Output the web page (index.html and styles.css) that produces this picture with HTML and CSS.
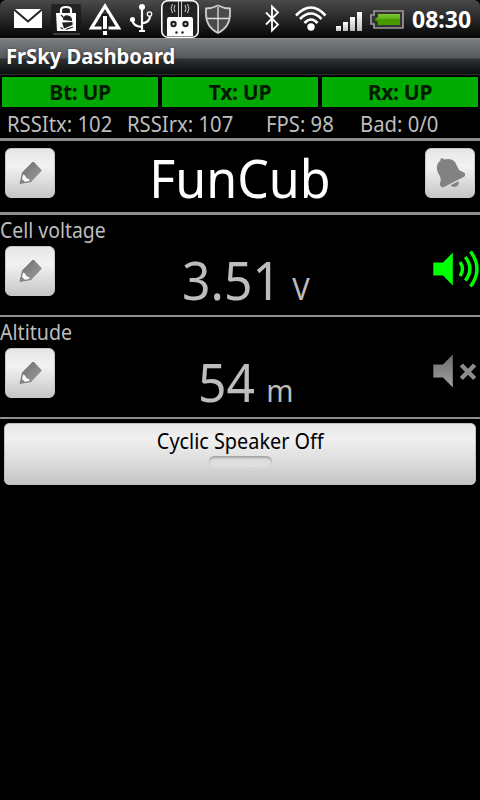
FILE: index.html
```
<!DOCTYPE html>
<html lang="en">
<head>
  <meta charset="UTF-8">
  <meta name="viewport" content="width=device-width, initial-scale=1.0">
  <title>FrSky Dashboard</title>
  <link rel="stylesheet" href="styles.css">
</head>
<body>
  <svg class="defs" width="0" height="0">
    <defs>
      <linearGradient id="pencilFill" x1="0" y1="0" x2="1" y2="1">
        <stop offset="0" stop-color="#6c6c6c"/>
        <stop offset="1" stop-color="#a0a0a0"/>
      </linearGradient>
      <linearGradient id="muteFill" x1="0" y1="0" x2="0" y2="1">
        <stop offset="0" stop-color="#6c6c6c"/>
        <stop offset="1" stop-color="#a0a0a0"/>
      </linearGradient>
      <linearGradient id="batteryFill" x1="0" y1="0" x2="0" y2="1">
        <stop offset="0" stop-color="#7cc536"/>
        <stop offset="0.5" stop-color="#5cae14"/>
        <stop offset="0.5" stop-color="#489a00"/>
        <stop offset="1" stop-color="#489a00"/>
      </linearGradient>
      <linearGradient id="barFill" x1="0" y1="0" x2="0" y2="1">
        <stop offset="0" stop-color="#fff"/>
        <stop offset="1" stop-color="#bbb"/>
      </linearGradient>
      <symbol id="pencil" viewBox="0 0 50 50">
        <path d="M15 35.500L17.500 24.500L27.500 14H29L37 22.500L26.500 33.500Z" fill="url(#pencilFill)"/>
        <path d="M18 26.500L20 27.500L21.500 30L24 31.200L24.500 33L20 33.800L17 31Z" fill="#fafafa"/>
        <path d="M15 35.500L17.500 24.500L28 14M15 35.500L26.500 33.500" fill="none" stroke="#757575" stroke-width="0.8"/>
      </symbol>
    </defs>
  </svg>

  <header class="status">
    <!-- notifications -->
    <svg class="status__icons" width="240" height="38" viewBox="0 0 240 38">
      <path d="M14 9H42V28H14Z" fill="#fff"/>
      <path d="M14 9.500L28 21.500L42 9.500" fill="none" stroke="#222" stroke-width="2"/>
      <rect x="51" y="4" width="30" height="30" rx="2" fill="#151515" opacity="0.65"/>
      <path d="M53 34H80" stroke="#666"/>
      <path d="M56 13H76V31H57Z" fill="#fff"/>
      <path d="M61 14V10Q61 7 66 7Q71 7 71 10V14" fill="none" stroke="#fff" stroke-width="2.200"/>
      <path d="M63 20Q63.500 14.500 68 15.500Q72.500 16.500 72 21Z" fill="#222"/>
      <path d="M62 22.500L72.500 22V25L64 28.500Z" fill="#222"/>
      <path d="M61 15L64.500 18.500M60.500 27.500L63 29M66 29.500L73 27" stroke="#222" stroke-width="1.300"/>
      <path d="M105 6L118.500 28H91.500Z" fill="none" stroke="#fff" stroke-width="3.200"/>
      <path d="M105 14V35" stroke="#181818" stroke-width="7"/>
      <path d="M105 16V29M105 31V35" stroke="#fff" stroke-width="4"/>
      <path d="M142 7V31M142 27Q132.500 26 132.500 20M142 23.500Q150 22 150 16" fill="none" stroke="#fff" stroke-width="2.200"/>
      <circle cx="142" cy="7" r="3" fill="#fff"/>
      <circle cx="132.500" cy="19.500" r="2.600" fill="#fff"/>
      <circle cx="149.500" cy="14" r="2.200" fill="none" stroke="#fff" stroke-width="1.300"/>
      <path d="M139 31H145" stroke="#fff" stroke-width="2"/>
      <rect x="161.800" y="0.800" width="36.400" height="36.400" rx="6" fill="#222" stroke="#fff" stroke-width="1.600"/>
      <path d="M178.500 1V17M181.500 1V17" stroke="#ddd" stroke-width="0.900"/>
      <path d="M169 17H191Q193 17 193 20V36H167V20Q167 17 169 17Z" fill="#fff"/>
      <g fill="none" stroke="#ccc" stroke-width="1">
        <path d="M175 5Q173 8.500 175 12M172.500 4Q169.500 8.500 172.500 13"/>
        <path d="M185 5Q187 8.500 185 12M187.500 4Q190.500 8.500 187.500 13"/>
      </g>
      <g fill="#222">
        <circle cx="173.500" cy="24" r="3.200"/>
        <circle cx="185.500" cy="24" r="3.200"/>
        <circle cx="176.500" cy="32.500" r="1.200"/>
        <circle cx="182.500" cy="32.500" r="1.200"/>
      </g>
      <circle cx="173.500" cy="24" r="1" fill="#fff"/>
      <circle cx="185.500" cy="24" r="1" fill="#fff"/>
      <path d="M206 8.500Q212 8.500 218 5.500Q224 8.500 230 8.500V14Q230 27 218 33Q206 27 206 14Z" fill="#4a4a4a" stroke="#ccc" stroke-width="1.800"/>
      <path d="M218 7V32M207 18.500H229" stroke="#ddd" stroke-width="1.300"/>
    </svg>
    <!-- bluetooth, wifi, signal, battery -->
    <svg class="status__icons" width="164" height="38" viewBox="240 0 164 38">
      <path d="M266 12.500L278 24.500L272 30.500V6.500L278 12.500L266 24.500" fill="none" stroke="#fff" stroke-width="1.800"/>
      <g fill="none" stroke="#fff" stroke-width="2.700">
        <path d="M296 15.500Q311 -0.500 325.500 15.500"/>
        <path d="M300 19Q311 8 321.500 19"/>
        <path d="M304.500 23Q311 16 317.500 23"/>
      </g>
      <circle cx="311" cy="27" r="3.700" fill="#fff"/>
      <g fill="url(#barFill)">
        <rect x="336" y="26" width="5" height="5"/>
        <rect x="343" y="22" width="5" height="9"/>
        <rect x="350" y="17" width="5" height="14"/>
        <rect x="357" y="12" width="5" height="19"/>
      </g>
      <path d="M374 11H403V28H374V24H371V15H374Z" fill="#333" stroke="#999" stroke-width="1.700"/>
      <path d="M378 14H400V25H378V22L374.500 19.500L378 17Z" fill="url(#batteryFill)"/>
    </svg>
    <span class="status__clock">08:30</span>
  </header>

  <div class="titlebar"><span class="titlebar__text">FrSky Dashboard</span></div>

  <main>
    <ul class="links">
      <li class="links__item">Bt: UP</li>
      <li class="links__item">Tx: UP</li>
      <li class="links__item">Rx: UP</li>
    </ul>
    <ul class="stats">
      <li class="stats__item stats__item--rssitx">RSSItx: 102</li>
      <li class="stats__item stats__item--rssirx">RSSIrx: 107</li>
      <li class="stats__item stats__item--fps">FPS: 98</li>
      <li class="stats__item">Bad: 0/0</li>
    </ul>

    <section class="model">
      <button class="btn"><svg width="50" height="50"><use href="#pencil"/></svg></button>
      <h1 class="model__name">FunCub</h1>
      <button class="btn">
        <svg width="50" height="50" viewBox="0 0 50 50">
          <path d="M15.500 12.500Q15 10 17.500 10L19 11.500Q26 9.500 30 14Q32 18 34 22Q36 23 39 24.500Q41 26 39.500 28.500L19 39Q16 40 15 37Q14.500 34 16 32Q15.500 28 13 25Q10.500 18 13.500 14.500Z" fill="#828282"/>
          <path d="M25.500 37.300L33.500 33.300Q34.500 36 32 38Q29 40.500 25.500 37.300Z" fill="#828282"/>
        </svg>
      </button>
    </section>

    <section class="channel">
      <h2 class="channel__name">Cell voltage</h2>
      <div class="channel__row">
        <button class="btn"><svg width="50" height="50"><use href="#pencil"/></svg></button>
        <p class="channel__value">3.51<span class="channel__unit">V</span></p>
        <svg class="channel__speaker" width="48" height="48" viewBox="0 0 48 48">
          <path d="M1.300 16.500H11L20.800 6.500V39.500L11 29.500H1.300Z" fill="#0f0"/>
          <path d="M28 16Q33 23 28 30M33.300 11Q42.500 23 33.300 34.500M38.500 5.500Q51.500 23 38.500 40.500" fill="none" stroke="#0f0" stroke-width="3.400"/>
        </svg>
      </div>
    </section>

    <section class="channel">
      <h2 class="channel__name channel__name--altitude">Altitude</h2>
      <div class="channel__row">
        <button class="btn"><svg width="50" height="50"><use href="#pencil"/></svg></button>
        <p class="channel__value">54<span class="channel__unit">m</span></p>
        <svg class="channel__speaker" width="48" height="48" viewBox="0 0 48 48">
          <path d="M1.300 16.500H11L20.800 6.500V39.500L11 29.500H1.300Z" fill="url(#muteFill)"/>
          <path d="M29.300 17L42.700 30.500M42.700 17L29.300 30.500" stroke="#8c8c8c" stroke-width="4.400"/>
        </svg>
      </div>
    </section>

    <button class="toggle">
      <span class="toggle__text">Cyclic Speaker Off</span>
      <span class="toggle__light"></span>
    </button>
  </main>
</body>
</html>
```
FILE: styles.css
```
* {
  margin: 0;
  padding: 0;
  box-sizing: border-box;
}

ul {
  list-style: none;
}

svg {
  display: block;
}

body {
  height: 800px;
  overflow: hidden;
  background: #000;
  color: #bdbdbd;
  font-family: "Noto Sans", "Open Sans", sans-serif;
  font-size: 21px;
  line-height: 24px;
}

.defs {
  position: absolute;
}

.status {
  display: flex;
  height: 38px;
  border-radius: 6px 6px 0 0;
  background: linear-gradient(#4a4a4a, #050505);
}

.status__icons {
  flex: none;
}

.status__clock {
  padding-left: 8px;
  color: #fff;
  font-size: 23px;
  font-weight: 700;
  line-height: 38px;
}

.titlebar {
  height: 37px;
  padding-left: 6px;
  border-top: 1px solid #8c8e90;
  border-bottom: 1px solid #2c2a2e;
  background: linear-gradient(#7b7d7f 0, #56585a 19px, #2f3133 20px, #0b0d0e 35px);
}

.titlebar__text {
  display: inline-block;
  color: #fff;
  font-size: 21px;
  font-weight: 700;
  line-height: 35px;
  text-shadow: 0 1px 3px #222;
  transform: scaleX(0.96);
  transform-origin: left;
}

.links {
  display: flex;
  gap: 4px;
  padding: 2px 2px 0;
}

.links__item {
  flex: 1;
  height: 30px;
  background: #00aa00;
  color: #001a00;
  font-weight: 700;
  line-height: 31px;
  letter-spacing: -0.3px;
  text-align: center;
}

.stats {
  display: flex;
  height: 34px;
  padding-left: 7px;
  border-bottom: 3px solid #8e8e8e;
  line-height: 34px;
  white-space: nowrap;
}

.stats__item {
  transform: scaleX(0.965);
  transform-origin: left;
}

.stats__item--rssitx {
  width: 120px;
}

.stats__item--rssirx {
  width: 139px;
}

.stats__item--fps {
  width: 94px;
}

.btn {
  flex: none;
  width: 50px;
  height: 50px;
  border: 1px solid #c8c8c8;
  border-radius: 6px;
  background: linear-gradient(#e6e6e6, #f2f2f2 35%, #e2e2e2 60%, #c6c6c6);
}

.btn svg {
  margin: -1px;
}

.model {
  display: flex;
  justify-content: space-between;
  height: 74px;
  padding: 7px 5px 0;
  border-bottom: 3px solid #8e8e8e;
}

.model__name {
  color: #fff;
  font-size: 53px;
  font-weight: 400;
  line-height: 60px;
  transform: scaleX(0.945);
}

.channel {
  height: 102px;
  border-bottom: 2px solid #8e8e8e;
}

.channel__name {
  height: 31px;
  font-size: 21px;
  font-weight: 400;
  line-height: 31px;
  transform: scaleX(0.925);
  transform-origin: left;
}

.channel__name--altitude {
  transform: scaleX(0.935);
}

.channel__row {
  display: flex;
  justify-content: space-between;
  padding-left: 5px;
}

.channel__value {
  display: flex;
  align-items: baseline;
  gap: 12px;
  margin-left: 5px;
  font-size: 53px;
  line-height: 68px;
  transform: scaleX(0.94);
}

.channel__unit {
  font-size: 31px;
  line-height: 40px;
}

.toggle {
  display: flex;
  flex-direction: column;
  align-items: center;
  width: 472px;
  height: 62px;
  margin: 4px 4px 0;
  padding-top: 5px;
  border: 1px solid #c0c0c0;
  border-radius: 5px;
  background: linear-gradient(#e6e6e6, #f0f0f0 25%, #dedede 60%, #c4c4c4);
  color: #000;
  font-family: inherit;
  font-size: 21px;
  line-height: 24px;
}

.toggle__text {
  transform: scaleX(0.945);
}

.toggle__light {
  width: 63px;
  height: 11px;
  margin-top: 3px;
  border-radius: 6px;
  background: #dedede;
  box-shadow: inset 0 2px 2px #a5a5a5;
}
```
